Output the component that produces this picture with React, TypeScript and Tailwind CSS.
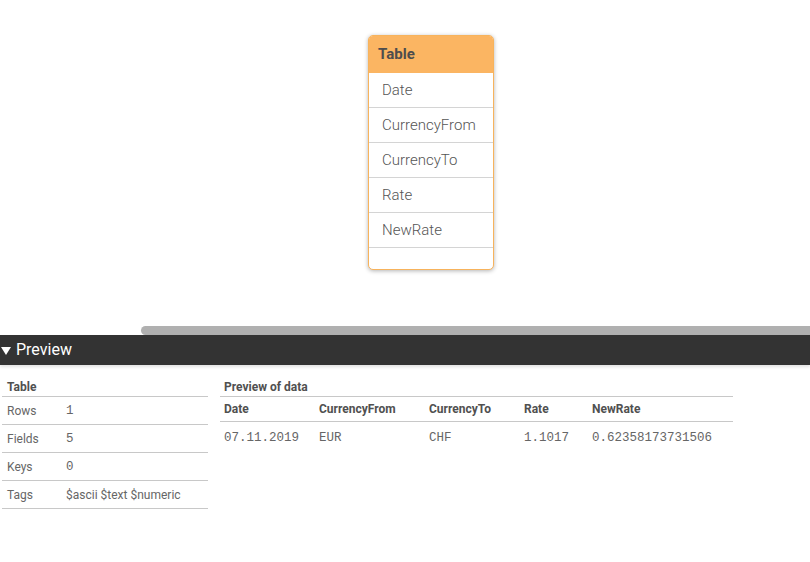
import React from "react";

const fields = ["Date", "CurrencyFrom", "CurrencyTo", "Rate", "NewRate"];

const meta: [string, string, boolean][] = [
  ["Rows", "1", true],
  ["Fields", "5", true],
  ["Keys", "0", true],
  ["Tags", "$ascii $text $numeric", false],
];

const mono = { fontFamily: "'Liberation Mono', 'DejaVu Sans Mono', monospace" };

const cols = [
  { name: "Date", w: "w-[95px]", v: "07.11.2019" },
  { name: "CurrencyFrom", w: "w-[110px]", v: "EUR" },
  { name: "CurrencyTo", w: "w-[95px]", v: "CHF" },
  { name: "Rate", w: "w-[68px]", v: "1.1017" },
  { name: "NewRate", w: "w-[141px]", v: "0.62358173731506" },
];

export default function App() {
  return (
    <div
      className="w-[810px] h-[562px] bg-white overflow-hidden text-[#666666]"
      style={{ fontFamily: "Roboto, 'Open Sans', sans-serif" }}
    >
      {/* canvas */}
      <div className="relative h-[326px]">
        <div className="absolute left-[368px] top-[35px] w-[126px] h-[235px] border border-[#f7b35c] rounded-[5px] bg-white shadow-[0_1px_4px_rgba(0,0,0,0.3)] overflow-hidden flex flex-col">
          <div className="h-[37px] bg-[#fbb562] flex items-center pl-[9px] text-[15px] font-bold text-[#4d4d4d]">
            Table
          </div>
          {fields.map((f) => (
            <div
              key={f}
              className="h-[35px] border-b border-[#d4d4d4] flex items-center pl-[13px] text-[15px] font-light text-[#555555]"
            >
              {f}
            </div>
          ))}
        </div>
      </div>
      {/* scrollbar */}
      <div className="ml-[141px] h-[9px] rounded-l-full bg-[#b0b0b0]" />
      {/* preview bar */}
      <div className="h-[30px] bg-[#333333] flex items-center text-white text-[16px] shadow-[0_2px_3px_rgba(0,0,0,0.12)]">
        <svg width="10" height="8" viewBox="0 0 10 8" className="ml-[1px] mr-[5px] mt-[1px]">
          <polygon points="0,0 10,0 5,8" fill="white" />
        </svg>
        <span>Preview</span>
      </div>
      {/* preview body */}
      <div className="flex pt-[15px] pl-[2px] gap-[12px]">
        <div className="w-[206px]">
          <div className="h-[17px] border-b border-[#c8c8c8] pl-[5px] text-[12px] font-bold text-[#505050] leading-[15px]">
            Table
          </div>
          {meta.map(([k, v, m]) => (
            <div key={k} className="h-[28px] border-b border-[#c8c8c8] flex items-center pl-[5px] text-[12px]">
              <span className="w-[59px]">{k}</span>
              <span style={m ? mono : undefined} className={m ? "text-[12.5px] pt-[2px]" : ""}>
                {v}
              </span>
            </div>
          ))}
        </div>
        <div className="w-[513px]">
          <div className="h-[17px] border-b border-[#c8c8c8] pl-[4px] text-[12px] font-bold text-[#505050] leading-[15px]">
            Preview of data
          </div>
          <div className="h-[25px] border-b border-[#c8c8c8] flex items-center pl-[4px] text-[12px] font-bold text-[#505050]">
            {cols.map((c) => (
              <span key={c.name} className={c.w}>
                {c.name}
              </span>
            ))}
          </div>
          <div className="h-[31px] flex items-center pl-[4px] pt-[1px] text-[12.5px] text-[#666666]" style={mono}>
            {cols.map((c) => (
              <span key={c.name} className={c.w}>
                {c.v}
              </span>
            ))}
          </div>
        </div>
      </div>
    </div>
  );
}
